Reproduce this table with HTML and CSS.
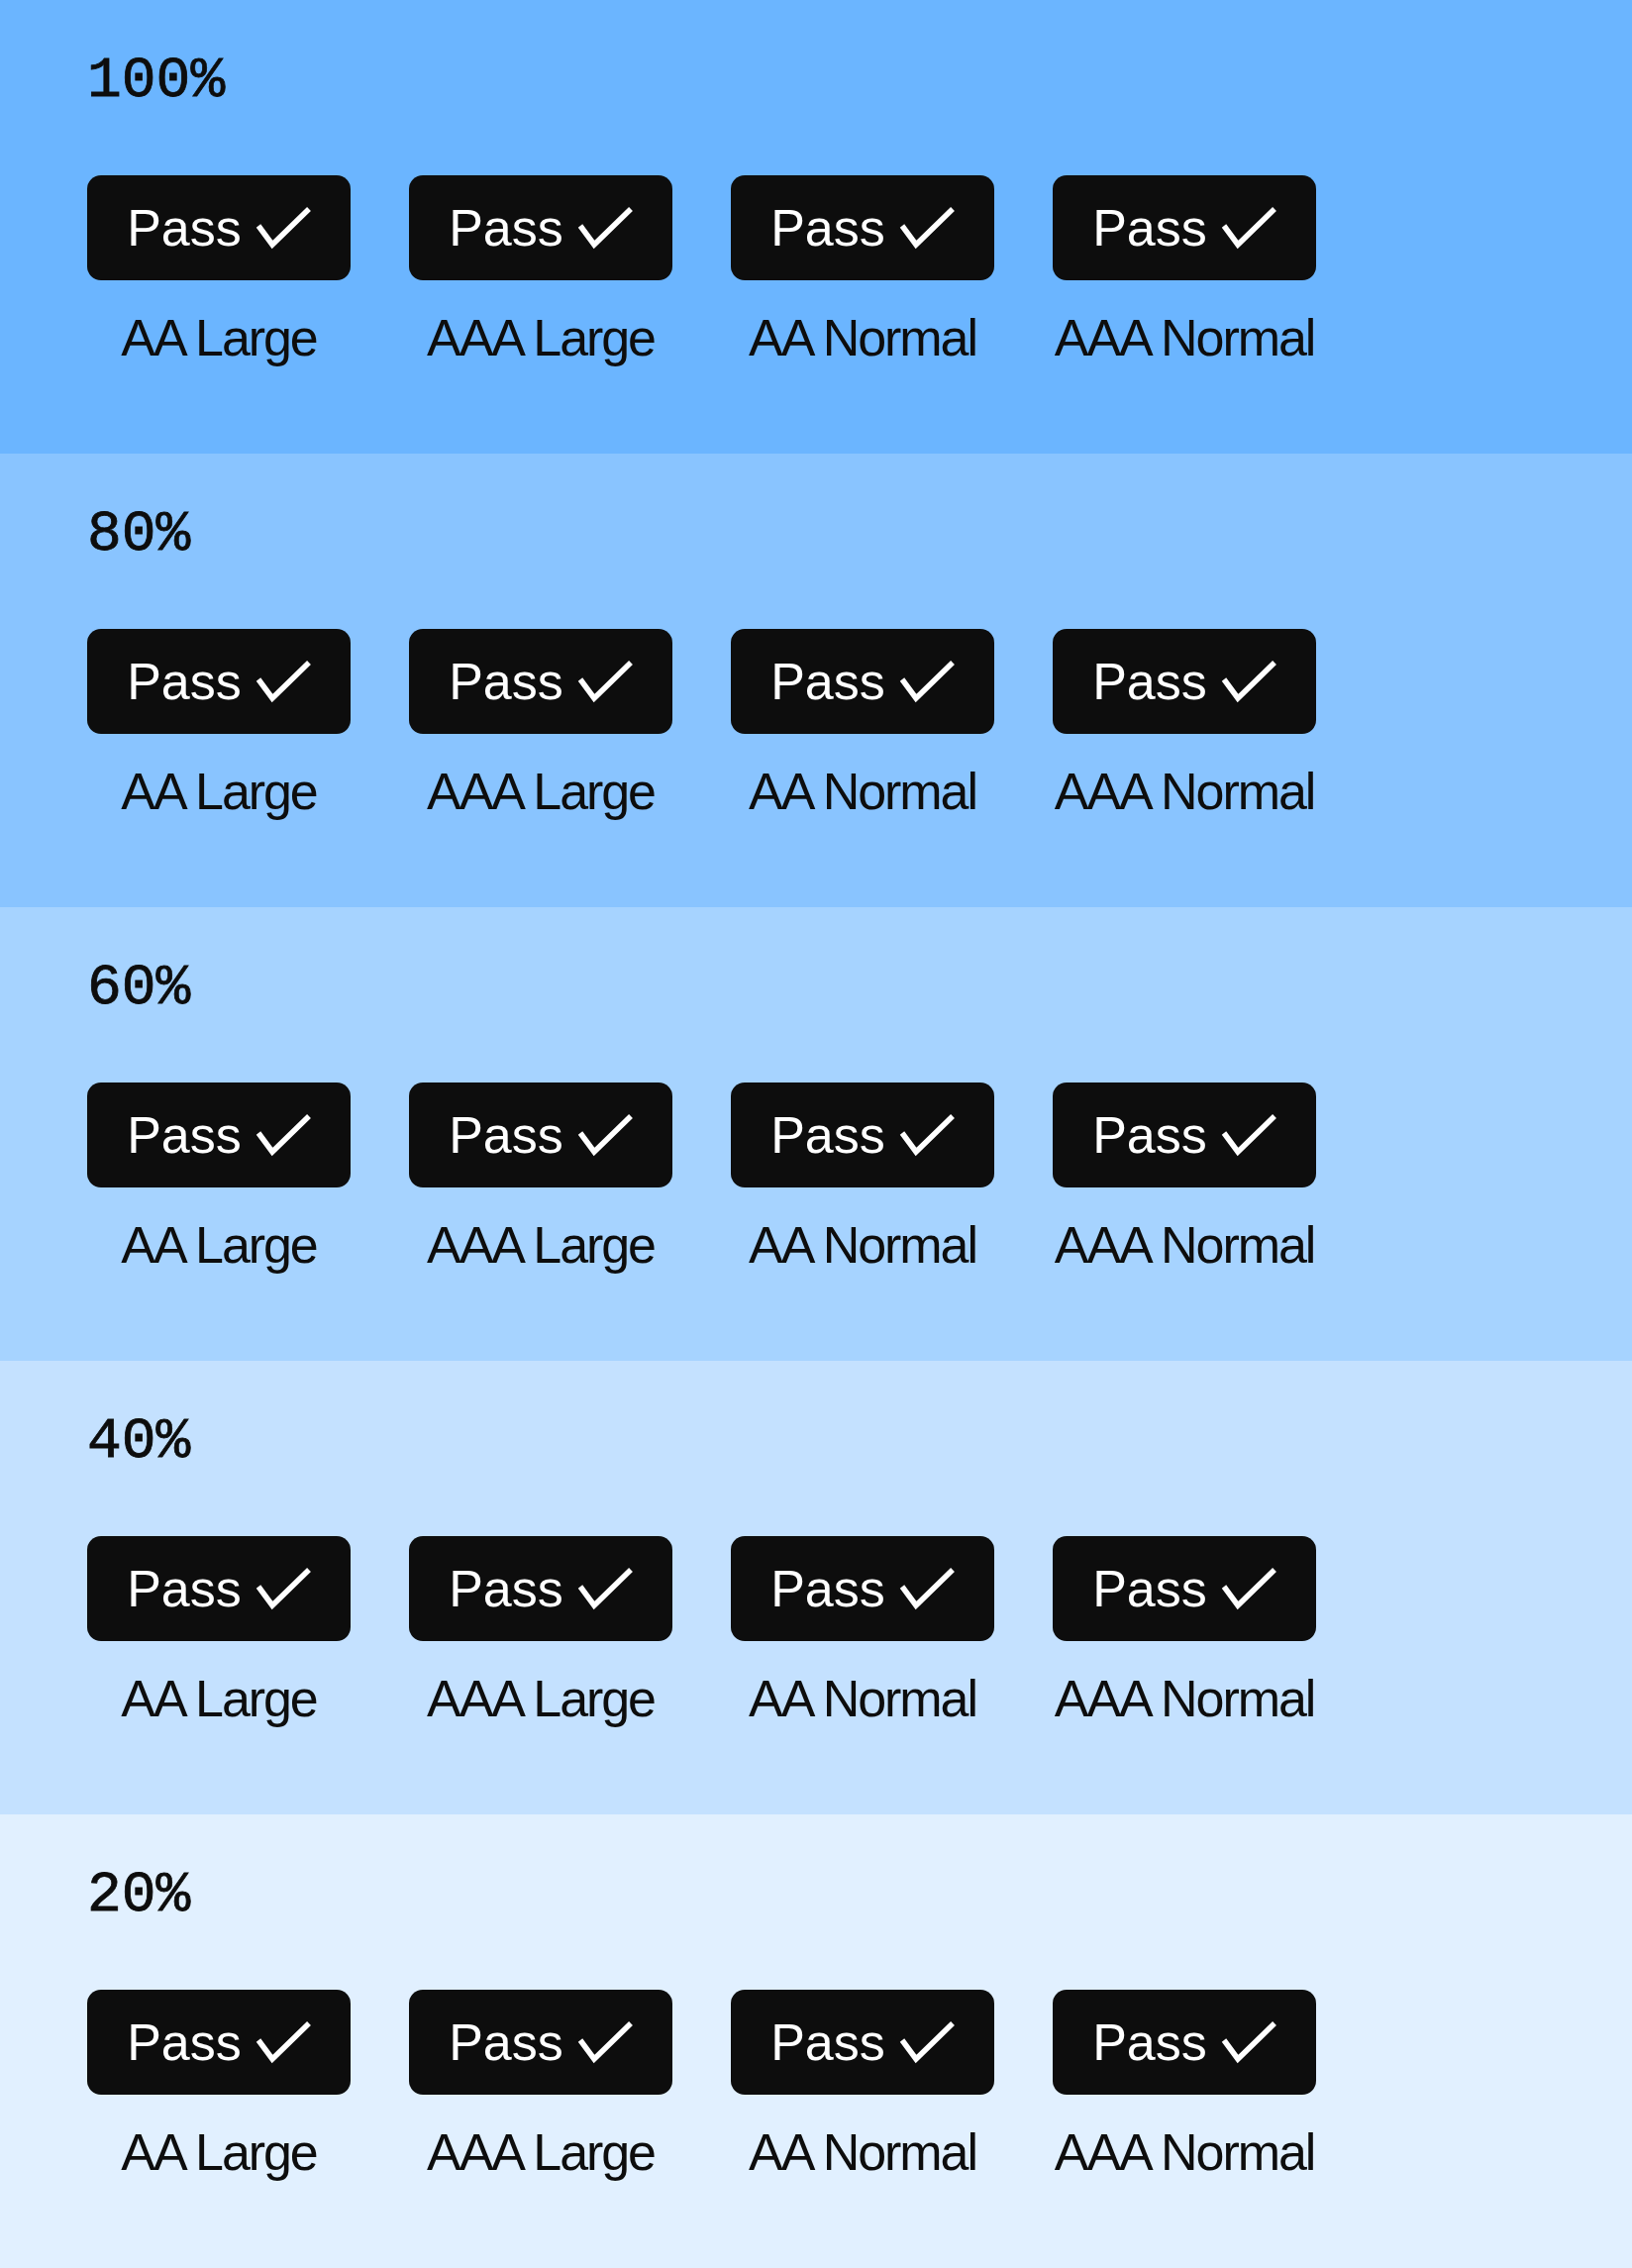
FILE: index.html
```html
<!DOCTYPE html>
<html lang="en">
<head>
<meta charset="utf-8">
<title>Contrast levels</title>
<link rel="stylesheet" href="styles.css">
</head>
<body>
<section class="level level-100">
  <h2 class="level-title">100%</h2>
  <div class="checks">
    <div class="check"><div class="pill"><span class="pill-text">Pass</span><svg class="tick" viewBox="0 0 56 44" width="56" height="44"><polyline points="3,20 17,39 54,3"/></svg></div><div class="label">AA Large</div></div>
    <div class="check"><div class="pill"><span class="pill-text">Pass</span><svg class="tick" viewBox="0 0 56 44" width="56" height="44"><polyline points="3,20 17,39 54,3"/></svg></div><div class="label">AAA Large</div></div>
    <div class="check"><div class="pill"><span class="pill-text">Pass</span><svg class="tick" viewBox="0 0 56 44" width="56" height="44"><polyline points="3,20 17,39 54,3"/></svg></div><div class="label">AA Normal</div></div>
    <div class="check"><div class="pill"><span class="pill-text">Pass</span><svg class="tick" viewBox="0 0 56 44" width="56" height="44"><polyline points="3,20 17,39 54,3"/></svg></div><div class="label">AAA Normal</div></div>
  </div>
</section>
<section class="level level-80">
  <h2 class="level-title">80%</h2>
  <div class="checks">
    <div class="check"><div class="pill"><span class="pill-text">Pass</span><svg class="tick" viewBox="0 0 56 44" width="56" height="44"><polyline points="3,20 17,39 54,3"/></svg></div><div class="label">AA Large</div></div>
    <div class="check"><div class="pill"><span class="pill-text">Pass</span><svg class="tick" viewBox="0 0 56 44" width="56" height="44"><polyline points="3,20 17,39 54,3"/></svg></div><div class="label">AAA Large</div></div>
    <div class="check"><div class="pill"><span class="pill-text">Pass</span><svg class="tick" viewBox="0 0 56 44" width="56" height="44"><polyline points="3,20 17,39 54,3"/></svg></div><div class="label">AA Normal</div></div>
    <div class="check"><div class="pill"><span class="pill-text">Pass</span><svg class="tick" viewBox="0 0 56 44" width="56" height="44"><polyline points="3,20 17,39 54,3"/></svg></div><div class="label">AAA Normal</div></div>
  </div>
</section>
<section class="level level-60">
  <h2 class="level-title">60%</h2>
  <div class="checks">
    <div class="check"><div class="pill"><span class="pill-text">Pass</span><svg class="tick" viewBox="0 0 56 44" width="56" height="44"><polyline points="3,20 17,39 54,3"/></svg></div><div class="label">AA Large</div></div>
    <div class="check"><div class="pill"><span class="pill-text">Pass</span><svg class="tick" viewBox="0 0 56 44" width="56" height="44"><polyline points="3,20 17,39 54,3"/></svg></div><div class="label">AAA Large</div></div>
    <div class="check"><div class="pill"><span class="pill-text">Pass</span><svg class="tick" viewBox="0 0 56 44" width="56" height="44"><polyline points="3,20 17,39 54,3"/></svg></div><div class="label">AA Normal</div></div>
    <div class="check"><div class="pill"><span class="pill-text">Pass</span><svg class="tick" viewBox="0 0 56 44" width="56" height="44"><polyline points="3,20 17,39 54,3"/></svg></div><div class="label">AAA Normal</div></div>
  </div>
</section>
<section class="level level-40">
  <h2 class="level-title">40%</h2>
  <div class="checks">
    <div class="check"><div class="pill"><span class="pill-text">Pass</span><svg class="tick" viewBox="0 0 56 44" width="56" height="44"><polyline points="3,20 17,39 54,3"/></svg></div><div class="label">AA Large</div></div>
    <div class="check"><div class="pill"><span class="pill-text">Pass</span><svg class="tick" viewBox="0 0 56 44" width="56" height="44"><polyline points="3,20 17,39 54,3"/></svg></div><div class="label">AAA Large</div></div>
    <div class="check"><div class="pill"><span class="pill-text">Pass</span><svg class="tick" viewBox="0 0 56 44" width="56" height="44"><polyline points="3,20 17,39 54,3"/></svg></div><div class="label">AA Normal</div></div>
    <div class="check"><div class="pill"><span class="pill-text">Pass</span><svg class="tick" viewBox="0 0 56 44" width="56" height="44"><polyline points="3,20 17,39 54,3"/></svg></div><div class="label">AAA Normal</div></div>
  </div>
</section>
<section class="level level-20">
  <h2 class="level-title">20%</h2>
  <div class="checks">
    <div class="check"><div class="pill"><span class="pill-text">Pass</span><svg class="tick" viewBox="0 0 56 44" width="56" height="44"><polyline points="3,20 17,39 54,3"/></svg></div><div class="label">AA Large</div></div>
    <div class="check"><div class="pill"><span class="pill-text">Pass</span><svg class="tick" viewBox="0 0 56 44" width="56" height="44"><polyline points="3,20 17,39 54,3"/></svg></div><div class="label">AAA Large</div></div>
    <div class="check"><div class="pill"><span class="pill-text">Pass</span><svg class="tick" viewBox="0 0 56 44" width="56" height="44"><polyline points="3,20 17,39 54,3"/></svg></div><div class="label">AA Normal</div></div>
    <div class="check"><div class="pill"><span class="pill-text">Pass</span><svg class="tick" viewBox="0 0 56 44" width="56" height="44"><polyline points="3,20 17,39 54,3"/></svg></div><div class="label">AAA Normal</div></div>
  </div>
</section>
</body>
</html>
```

FILE: styles.css
```css
html, body {
  margin: 0;
  padding: 0;
}

body {
  font-family: "Liberation Sans", Arial, sans-serif;
  color: #0d0d0d;
}

.level {
  box-sizing: border-box;
  height: 458px;
  padding: 54px 0 0 88px;
  display: flex;
  flex-direction: column;
}

.level-100 { background: #6bb5ff; }
.level-80  { background: #89c4ff; }
.level-60  { background: #a6d3ff; }
.level-40  { background: #c4e1ff; }
.level-20  { background: #e1f0ff; }

.level-title {
  margin: 0;
  font-family: "Liberation Mono", "DejaVu Sans Mono", monospace;
  font-weight: normal;
  font-size: 58px;
  line-height: 56px;
  letter-spacing: 0;
  -webkit-text-stroke: 0.8px #0d0d0d;
  color: #0d0d0d;
}

.checks {
  margin-top: 67px;
  display: flex;
  gap: 59px;
}

.check {
  width: 266px;
  display: flex;
  flex-direction: column;
  align-items: center;
}

.pill {
  box-sizing: border-box;
  width: 266px;
  height: 106px;
  border-radius: 14px;
  background: #0d0d0d;
  color: #ffffff;
  display: flex;
  align-items: center;
  justify-content: center;
  gap: 14px;
}

.pill-text {
  font-size: 52px;
  line-height: 52px;
}

.tick {
  display: block;
  fill: none;
  stroke: #ffffff;
  stroke-width: 5.5;
  stroke-linecap: butt;
  stroke-linejoin: miter;
}

.label {
  margin-top: 32px;
  font-size: 52px;
  line-height: 52px;
  letter-spacing: -0.04em;
  white-space: nowrap;
  color: #0d0d0d;
}
```
